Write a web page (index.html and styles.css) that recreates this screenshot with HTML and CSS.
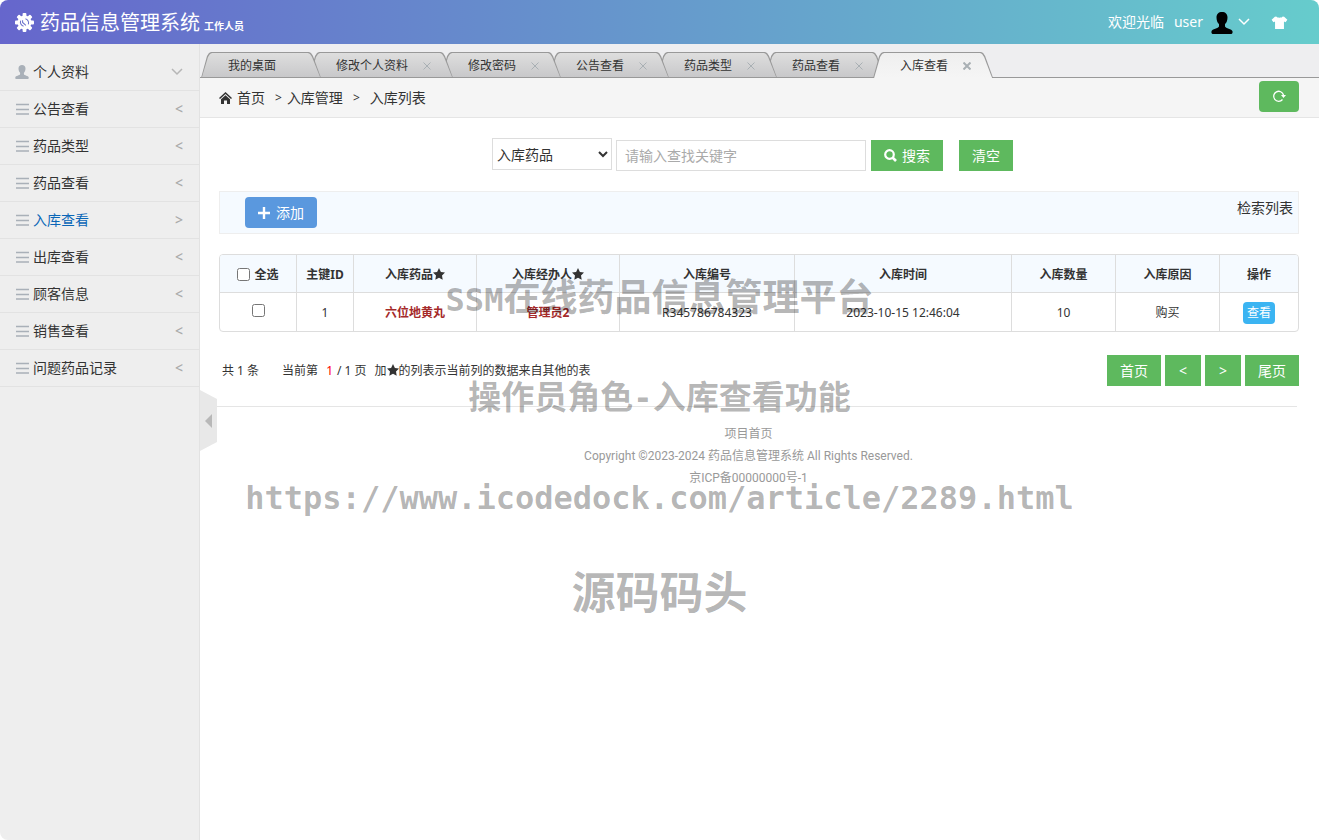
FILE: index.html
```html
<!DOCTYPE html>
<html lang="zh-CN">
<head>
<meta charset="utf-8">
<title>药品信息管理系统</title>
<link rel="stylesheet" href="styles.css">
</head>
<body>
<svg class="defs" aria-hidden="true">
  <symbol id="i-person" viewBox="0 0 22 22"><path d="M11 0C7.600 0 5.500 2 5.500 5.500c0 3 1 5.200 2.500 6.600v2.400C7.500 16.200 1 17 .5 19.200c-.2 1.500 0 2.300 1 2.800h19c1-.5 1.200-1.300 1-2.800C21 17 14.500 16.200 14 14.500v-2.400c1.500-1.400 2.500-3.600 2.500-6.600C16.500 2 14.400 0 11 0z"/></symbol>
  <symbol id="i-bars" viewBox="0 0 14 12"><path d="M1 1.500h13M1 6.500h13M1 11h13" stroke="currentColor" stroke-width="1.500"/></symbol>
  <symbol id="i-down" viewBox="0 0 12 8"><path d="M1 1l5 5 5-5" fill="none" stroke="currentColor" stroke-width="1.500"/></symbol>
  <symbol id="i-star" viewBox="0 0 12 12"><path d="M6 0l1.900 3.900 4.100.6-3 3 .7 4.300L6 9.800l-3.700 2L3 7.500l-3-3 4.100-.6z"/></symbol>
</svg>
<div class="page">
  <header class="header">
    <svg class="logo" viewBox="0 0 20 20"><g fill="#fff"><g><rect x="8" y="0" width="4" height="20" rx="1"/><rect x="0" y="8" width="20" height="4" rx="1"/></g><g transform="rotate(45 10 10)"><rect x="8" y="0" width="4" height="20" rx="1"/><rect x="0" y="8" width="20" height="4" rx="1"/></g><circle cx="10" cy="10" r="7.300"/></g><path d="M6 8a4.500 4.500 0 0 0 3 6M14 12a4.500 4.500 0 0 0-3-6M8 7.500v2.500l3.500 3" fill="none" stroke="#6a70cc" stroke-width="1.100"/></svg>
    <h1 class="brand">药品信息管理系统</h1><span class="role">工作人员</span>
    <div class="user">
      <span>欢迎光临</span>
      <span class="user-name">user</span>
      <svg class="avatar"><use href="#i-person"/></svg>
      <svg class="user-down"><use href="#i-down"/></svg>
      <svg class="shirt" viewBox="0 0 17 14"><path d="M5 .5c1 1.700 6 1.700 7 0l1.500.3L17 4l-2 2.700-1.700-.9V14H3.700V5.800L2 6.700 0 4 3.500.8z" fill="#fff"/></svg>
    </div>
  </header>
  <div class="body">
    <nav class="side">
      <a class="item" href="#"><svg class="ico ico-person"><use href="#i-person"/></svg><span>个人资料</span><svg class="down"><use href="#i-down"/></svg></a>
      <a class="item" href="#"><svg class="ico"><use href="#i-bars"/></svg><span>公告查看</span><b class="arrow">&lt;</b></a>
      <a class="item" href="#"><svg class="ico"><use href="#i-bars"/></svg><span>药品类型</span><b class="arrow">&lt;</b></a>
      <a class="item" href="#"><svg class="ico"><use href="#i-bars"/></svg><span>药品查看</span><b class="arrow">&lt;</b></a>
      <a class="item item-on" href="#"><svg class="ico"><use href="#i-bars"/></svg><span>入库查看</span><b class="arrow">&gt;</b></a>
      <a class="item" href="#"><svg class="ico"><use href="#i-bars"/></svg><span>出库查看</span><b class="arrow">&lt;</b></a>
      <a class="item" href="#"><svg class="ico"><use href="#i-bars"/></svg><span>顾客信息</span><b class="arrow">&lt;</b></a>
      <a class="item" href="#"><svg class="ico"><use href="#i-bars"/></svg><span>销售查看</span><b class="arrow">&lt;</b></a>
      <a class="item" href="#"><svg class="ico"><use href="#i-bars"/></svg><span>问题药品记录</span><b class="arrow">&lt;</b></a>
    </nav>
    <main class="main">
      <button class="fold" aria-label="收起菜单"><svg class="fold-ico" viewBox="0 0 7 14"><path d="M7 0v14L0 7z" fill="#b8b8b8"/></svg></button>
      <div class="tabs">
        <div class="tab"><span>我的桌面</span></div>
        <div class="tab"><span>修改个人资料</span><button class="close" aria-label="关闭"><svg viewBox="0 0 8 8"><path d="M.5.5l7 7M7.500.5l-7 7"/></svg></button></div>
        <div class="tab"><span>修改密码</span><button class="close" aria-label="关闭"><svg viewBox="0 0 8 8"><path d="M.5.5l7 7M7.500.5l-7 7"/></svg></button></div>
        <div class="tab"><span>公告查看</span><button class="close" aria-label="关闭"><svg viewBox="0 0 8 8"><path d="M.5.5l7 7M7.500.5l-7 7"/></svg></button></div>
        <div class="tab"><span>药品类型</span><button class="close" aria-label="关闭"><svg viewBox="0 0 8 8"><path d="M.5.5l7 7M7.500.5l-7 7"/></svg></button></div>
        <div class="tab"><span>药品查看</span><button class="close" aria-label="关闭"><svg viewBox="0 0 8 8"><path d="M.5.5l7 7M7.500.5l-7 7"/></svg></button></div>
        <div class="tab tab-on"><span>入库查看</span><button class="close" aria-label="关闭"><svg viewBox="0 0 8 8"><path d="M.5.5l7 7M7.500.5l-7 7"/></svg></button></div>
      </div>
      <div class="crumbs">
        <svg class="home" viewBox="0 0 13 12"><path d="M6.500 0L13 6l-1 1-5.500-5L1 7 0 6z"/><path d="M6.500 3.200L11 7.300V12H8V8.500H5V12H2V7.300z"/></svg>
        <a href="#">首页</a><span class="sep sep-first">&gt;</span><span>入库管理</span><span class="sep">&gt;</span><span>入库列表</span>
        <button class="refresh" aria-label="刷新"><svg viewBox="0 0 14 12"><path d="M10.500 9.500A5 5 0 1 1 11.500 5" fill="none" stroke="#fff" stroke-width="1.300"/><path d="M9 5h5l-2.500 3z" fill="#fff"/></svg></button>
      </div>
      <div class="content">
        <form class="search">
          <select class="field-select" aria-label="查找字段"><option>入库药品</option></select>
          <input class="field" type="text" placeholder="请输入查找关键字" aria-label="关键字">
          <button class="btn btn-search" type="button"><svg class="glass" viewBox="0 0 13 13"><circle cx="5.500" cy="5.500" r="4.300" fill="none" stroke="#fff" stroke-width="2.200"/><path d="M8.500 8.500l3.500 3.500" stroke="#fff" stroke-width="2.600"/></svg>搜索</button>
          <button class="btn btn-clear" type="button">清空</button>
        </form>
        <div class="bar">
          <button class="btn btn-add"><svg class="plus" viewBox="0 0 12 12"><path d="M6 0v12M0 6h12" stroke="#fff" stroke-width="2.400"/></svg>添加</button>
          <span class="bar-title">检索列表</span>
        </div>
        <div class="table-wrap">
        <table class="table">
          <colgroup><col class="c1"><col class="c2"><col class="c3"><col class="c4"><col class="c5"><col class="c6"><col class="c7"><col class="c7"><col class="c9"></colgroup>
          <thead><tr>
            <th><label class="all"><input class="check" type="checkbox">全选</label></th>
            <th>主键ID</th>
            <th>入库药品<svg class="star"><use href="#i-star"/></svg></th>
            <th>入库经办人<svg class="star"><use href="#i-star"/></svg></th>
            <th>入库编号</th><th>入库时间</th><th>入库数量</th><th>入库原因</th><th>操作</th>
          </tr></thead>
          <tbody><tr>
            <td><input class="check" type="checkbox" aria-label="选择"></td>
            <td>1</td><td class="ref">六位地黄丸</td><td class="ref">管理员2</td><td>R345786784323</td><td>2023-10-15 12:46:04</td><td>10</td><td>购买</td>
            <td><a class="view" href="#">查看</a></td>
          </tr></tbody>
        </table>
        </div>
        <div class="pager">
          <p class="info"><span class="total">共 1 条</span><span>当前第</span><span class="now">1</span><span>/ 1 页</span><span class="note">加<svg class="star"><use href="#i-star"/></svg>的列表示当前列的数据来自其他的表</span></p>
          <div class="pages"><button class="btn">首页</button><button class="btn">&lt;</button><button class="btn">&gt;</button><button class="btn">尾页</button></div>
        </div>
      </div>
      <footer class="footer">
        <p>项目首页</p>
        <p>Copyright ©2023-2024 药品信息管理系统 All Rights Reserved.</p>
        <p>京ICP备00000000号-1</p>
      </footer>
    </main>
  </div>
  <div class="marks">
    <p class="mark mark-a"><span class="mono">SSM</span>在线药品信息管理平台</p>
    <p class="mark mark-b">操作员角色<span class="mono">-</span>入库查看功能</p>
    <p class="mark mark-c"><span class="mono">https://www.icodedock.com/article/2289.html</span></p>
    <p class="mark mark-d">源码码头</p>
  </div>
</div>
</body>
</html>
```
FILE: styles.css
```css
* { box-sizing: border-box; }
body { margin: 0; background: #fff; color: #333; font: 14px/20px "Noto Sans", "Noto Sans CJK SC", sans-serif; }
p, h1 { margin: 0; }
a { color: inherit; text-decoration: none; }
button, input, select { font: inherit; color: inherit; margin: 0; }
button { border: 0; padding: 0; background: none; cursor: pointer; }
svg { display: block; flex: none; }
.defs { position: absolute; width: 0; height: 0; }

.page { position: relative; display: flex; flex-direction: column; min-height: 100vh; border-radius: 8px; overflow: hidden; background: #fff; }

.header { display: flex; align-items: center; height: 44px; padding: 0 31px 0 15px; color: #fff; background: linear-gradient(90deg, #6666cc, #66cccc); }
.logo { width: 19px; height: 19px; margin-right: 6px; }
.brand { padding-top: 2px; font-size: 20px; line-height: 28px; font-weight: 400; }
.role { margin: 8px 0 0 4px; font-size: 10px; line-height: 14px; font-weight: 700; }
.user { display: flex; align-items: center; margin-left: auto; }
.user-name { margin: 0 8px 0 10px; }
.avatar { width: 22px; height: 22px; margin-top: 2px; fill: #000; }
.user-down { width: 12px; height: 8px; margin: 0 21px 0 5px; }
.shirt { width: 17px; height: 13px; }

.body { display: flex; flex: 1; }
.side { flex: none; width: 199px; padding-top: 10px; background: #eee; }
.item { display: flex; align-items: center; height: 37px; padding: 0 16px 0 15px; border-bottom: 1px solid #e2e2e2; }
.item-on { color: #0a66b7; }
.ico { width: 14px; height: 12px; margin-right: 4px; color: #a9b0b8; fill: #a9b0b8; }
.ico-person { height: 14px; }
.down { width: 12px; height: 8px; margin-left: auto; color: #b6b6b6; }
.arrow { margin: 0 0 0 auto; font-weight: 500; color: #aaa; }

.main { position: relative; flex: 1; min-width: 0; border-left: 1px solid #e2e2e2; }
.fold { position: absolute; left: 0; top: 346px; display: flex; align-items: center; justify-content: flex-end; width: 17px; height: 61px; padding-right: 5px; background: #e8e8e8; clip-path: polygon(0 0, 100% 9px, 100% calc(100% - 9px), 0 100%); }
.fold-ico { width: 7px; height: 14px; }

.tabs { display: flex; align-items: flex-end; height: 34px; padding-left: 1px; background: linear-gradient(#999, #999) 0 100% / 100% 1px no-repeat #eeeef0; }
.tab { position: relative; z-index: 1; isolation: isolate; display: flex; align-items: center; height: 26px; margin-right: -12px; padding: 2px 45px 0 27px; font-size: 12px; }
.tab:has(.close) { padding-right: 22px; }
.tab:nth-child(1) { z-index: 7; }
.tab:nth-child(2) { z-index: 6; }
.tab:nth-child(3) { z-index: 5; }
.tab:nth-child(4) { z-index: 4; }
.tab:nth-child(5) { z-index: 3; }
.tab:nth-child(6) { z-index: 2; }
.tab::before, .tab::after { content: ""; position: absolute; z-index: -1; inset: 0; background: #999; clip-path: polygon(0 100%, 6px 4px, 8px 1px, 10px 0, calc(100% - 12px) 0, calc(100% - 10px) 1px, calc(100% - 8px) 4px, 100% 100%); }
.tab::after { inset: 1px; background: linear-gradient(#dedede, #c8c8ca); }
.tab.tab-on { z-index: 8; }
.tab-on::after { bottom: 0; background: linear-gradient(#efefef, #f5f5f5); }
.close { width: 8px; height: 8px; margin-left: 15px; }
.close svg { width: 8px; height: 8px; stroke: #a9b0b4; }
.tab-on .close svg { stroke-width: 2; }

.crumbs { display: flex; align-items: center; height: 40px; padding: 0 20px 0 19px; border-bottom: 1px solid #e5e5e5; background: #f5f5f5; }
.home { width: 13px; height: 12px; margin-right: 5px; fill: #333; }
.sep { margin: 0 10px; font-size: 12px; }
.sep-first { margin-right: 5px; }
.refresh { display: flex; align-items: center; justify-content: center; width: 40px; height: 31px; margin: 0 0 3px auto; border-radius: 4px; background: #5eb95e; }
.refresh svg { width: 14px; height: 12px; }

.content { padding: 20px 20px 0 19px; }
.search { display: flex; justify-content: center; align-items: flex-end; padding-right: 13px; }
.field-select { width: 120px; height: 32px; margin: 0 4px 1px 0; padding: 0; border: 1px solid #ddd; background: #fff; }
.field { width: 250px; height: 31px; margin-right: 5px; padding: 0 8px; border: 1px solid #ddd; background: #fff; }
.field::placeholder { color: #aaa; }
.btn { display: flex; align-items: center; justify-content: center; min-width: 36px; height: 31px; padding: 0 13px; color: #fff; background: #5eb95e; }
.btn-clear { margin-left: 16px; }
.glass { width: 13px; height: 13px; margin-right: 5px; }
.bar { display: flex; justify-content: space-between; align-items: flex-start; min-height: 43px; margin-top: 20px; padding: 5px 5px 5px 25px; border: 1px solid #eee; background: #f5faff; }
.bar-title { line-height: 22px; }
.btn-add { border-radius: 4px; background: #5a98de; }
.plus { width: 12px; height: 12px; margin-right: 6px; }

.table-wrap { margin-top: 20px; border: 1px solid #ddd; border-radius: 4px; overflow: hidden; }
.table { width: 100%; border-collapse: separate; border-spacing: 0; font-size: 12px; text-align: center; table-layout: fixed; }
.table th, .table td { height: 38px; padding: 2px 0 0; border-left: 1px solid #ddd; }
.table th:first-child, .table td:first-child { border-left: 0; }
.table th { background: #f5faff; border-bottom: 1px solid #ddd; }
.c1 { width: 76px; }
.c2 { width: 5.290%; }
.c3 { width: 11.410%; }
.c4 { width: 13.270%; }
.c5 { width: 16.230%; }
.c6 { width: 20.130%; }
.c7 { width: 9.650%; }
.all { display: flex; align-items: center; justify-content: center; gap: 4px; }
.check { width: 13px; height: 13px; }
.star { display: inline-block; width: 12px; height: 12px; vertical-align: -1px; fill: #333; }
.ref { font-weight: 700; color: #a52a2a; }
.view { display: inline-block; padding: 1px 4px; border-radius: 4px; color: #fff; background: #3bb4f2; }

.pager { display: flex; justify-content: space-between; align-items: center; margin-top: 23px; }
.info { display: flex; padding-left: 3px; font-size: 12px; }
.total { margin-right: 23px; }
.now { margin: 0 4px 0 8px; color: #f00; }
.note { margin-left: 8px; }
.pages { display: flex; gap: 4px; }

.footer { margin: 20px 22px 0 0; padding-top: 16px; border-top: 1px solid #e5e5e5; text-align: center; font: 12px/22px Roboto, "Noto Sans CJK SC", sans-serif; color: #999; }

.marks { position: absolute; z-index: 9; inset: 275px 0 auto 0; display: flex; flex-direction: column; gap: 60px; text-align: center; pointer-events: none; }
.mark { height: 40px; color: rgba(0, 0, 0, .3); font: 700 32px/40px "Noto Sans CJK SC", sans-serif; }
.mark-a { font-size: 37px; }
.mark-b { font-size: 33px; }
.mark-d { margin-top: -5px; font-size: 44px; }
.mono { font-family: "DejaVu Sans Mono", monospace; font-size: 32px; line-height: 20px; }
.mark-c .mono { line-height: 40px; }
```
